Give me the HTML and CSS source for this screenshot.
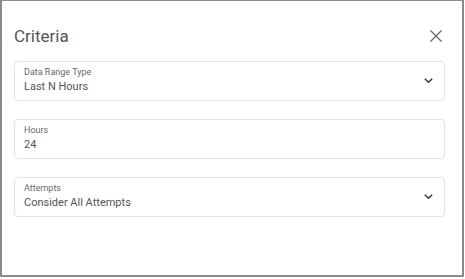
FILE: index.html
```html
<!DOCTYPE html>
<html>
<head>
<meta charset="utf-8">
<link rel="stylesheet" href="styles.css">
</head>
<body>
<div class="dialog">
  <div class="header">
    <h1 class="title">Criteria</h1>
    <button class="close" aria-label="Close">
      <svg width="12" height="12" viewBox="0 0 12 12"><path d="M0.5 0.5 L11.5 11.5 M11.5 0.5 L0.5 11.5" stroke="#6b6b6b" stroke-width="1.4" fill="none"/></svg>
    </button>
  </div>
  <div class="fields">
    <div class="field">
      <div class="field-text">
        <div class="label">Data Range Type</div>
        <div class="value">Last N Hours</div>
      </div>
      <svg class="chev" width="9" height="5" viewBox="0 0 9 5"><path d="M0.8 0.8 L4.5 4.2 L8.2 0.8" stroke="#333" stroke-width="1.5" fill="none"/></svg>
    </div>
    <div class="field">
      <div class="field-text">
        <div class="label">Hours</div>
        <div class="value">24</div>
      </div>
    </div>
    <div class="field">
      <div class="field-text">
        <div class="label">Attempts</div>
        <div class="value">Consider All Attempts</div>
      </div>
      <svg class="chev" width="9" height="5" viewBox="0 0 9 5"><path d="M0.8 0.8 L4.5 4.2 L8.2 0.8" stroke="#333" stroke-width="1.5" fill="none"/></svg>
    </div>
  </div>
</div>
</body>
</html>
```
FILE: styles.css
```css
html, body {
  margin: 0;
  padding: 0;
  background: #ffffff;
}
body {
  font-family: Roboto, "Liberation Sans", sans-serif;
}
.dialog {
  box-sizing: border-box;
  width: 464px;
  height: 277px;
  border: 2px solid #8a8a8a;
  border-top-width: 1px;
  padding: 25px 17px 0 12px;
  background: #fff;
}
.header {
  display: flex;
  align-items: center;
  justify-content: space-between;
  height: 20px;
}
.title {
  margin: 0;
  font-size: 17px;
  line-height: 20px;
  font-weight: 400;
  color: #555555;
}
.close {
  border: 0;
  background: none;
  padding: 0;
  margin-right: 3px;
  width: 12px;
  height: 12px;
  display: flex;
}
.fields {
  margin-top: 15px;
  display: flex;
  flex-direction: column;
  gap: 18px;
}
.field {
  box-sizing: border-box;
  height: 40px;
  border: 1px solid #e1e4e8;
  border-radius: 4px;
  padding: 5px 11px 6px 9px;
  display: flex;
  align-items: center;
  justify-content: space-between;
  box-shadow: 0 0 3px rgba(0, 0, 0, 0.03);
}
.field-text {
  display: flex;
  flex-direction: column;
  gap: 2px;
}
.label {
  font-size: 9px;
  line-height: 11px;
  color: #6a6a6a;
}
.value {
  font-size: 11px;
  line-height: 14px;
  color: #555555;
}
.chev {
  display: block;
}
```
